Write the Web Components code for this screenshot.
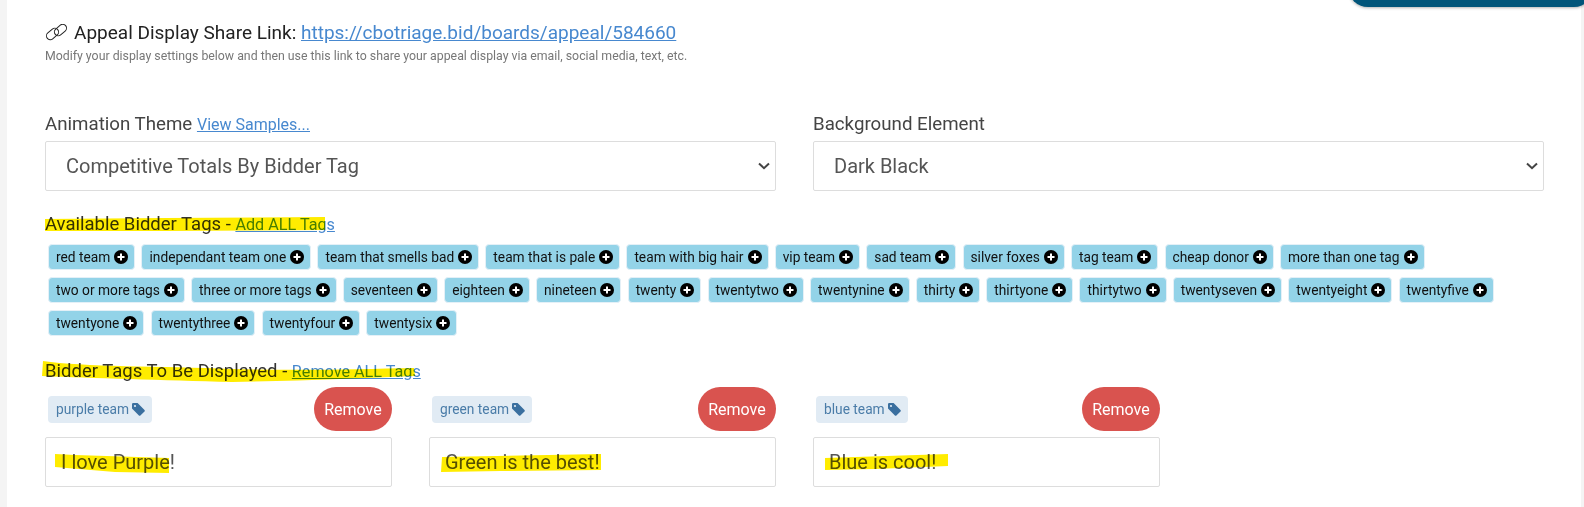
<!DOCTYPE html>
<html lang="en">
<head>
<meta charset="UTF-8">
<title>Appeal Display</title>
<style>
  html, body { margin: 0; height: 100%; }
  body { background: #f4f4f4; font-family: Roboto, "Liberation Sans", sans-serif; color: #333; overflow: hidden; }
  .sheet { margin: 0 3px 0 7px; height: 507px; background: #fff; padding: 0 37px 0 38px; box-sizing: border-box; position: relative; }
  .row { display: grid; grid-template-columns: repeat(4, 1fr); column-gap: 37px; }
  .two { grid-column: span 2; }
</style>
</head>
<body>
<div class="sheet">
  <top-pill></top-pill>
  <share-link url="https://cbotriage.bid/boards/appeal/584660">Modify your display settings below and then use this link to share your appeal display via email, social media, text, etc.</share-link>

  <div class="row" style="margin-top:51px">
    <field-select class="two" label="Animation Theme" link="View Samples..." value="Competitive Totals By Bidder Tag"></field-select>
    <field-select class="two" label="Background Element" value="Dark Black"></field-select>
  </div>

  <section-heading style="margin-top:23px" link="Add ALL Tags" mark="M0 2 L120 1 L280 0 L280 13 L120 14 L0 14 Z" mark-w="280" mark-h="15" mark-x="0" mark-y="3">Available Bidder Tags</section-heading>
  <tag-list id="available" style="margin-top:9px"></tag-list>

  <section-heading style="margin-top:25px" link="Remove ALL Tags" mark="M1 0 C40 6 120 5 190 8 C260 10 320 8 372 7 L373 15 C320 17 260 20 190 21 C120 19 50 17 0 15 Z" mark-w="374" mark-h="22" mark-x="-3" mark-y="0">Bidder Tags To Be Displayed</section-heading>
  <div class="row" style="margin-top:5px">
    <display-card tag="purple team" text="I love Purple!" mark="M0 0 L20 1 L114 4 L114 19 L60 18 L0 13 Z" mark-w="114" mark-h="19" mark-x="9"></display-card>
    <display-card tag="green team" text="Green is the best!" mark="M1 3 L160 0 L160 16 L60 17 L0 18 Z" mark-w="160" mark-h="18" mark-x="11"></display-card>
    <display-card tag="blue team" text="Blue is cool!" mark="M0 4 L123 0 L123 12 L50 15 L0 16 Z" mark-w="123" mark-h="16" mark-x="11"></display-card>
  </div>
</div>

<template id="share-tpl">
  <style>
    :host { display: block; padding-top: 22px; }
    .title { display: flex; align-items: center; gap: 6px; font-size: 19px; line-height: 21px; color: #222; }
    svg { width: 23px; height: 17px; flex: none; }
    a { color: #4788cf; }
    .hint { font-size: 12.32px; line-height: 14px; color: #777; margin-top: 6px; }
  </style>
  <div class="title">
    <svg viewBox="0 0 23 17" fill="none" stroke="#222" stroke-width="1">
      <rect x="0.8" y="6.2" width="13.5" height="7.6" rx="3.8" transform="rotate(-40 7.5 10)"/>
      <rect x="8.7" y="2.2" width="13.5" height="7.6" rx="3.8" transform="rotate(-40 15.5 6)"/>
    </svg>
    <span>Appeal Display Share Link: <a href="#"></a></span>
  </div>
  <div class="hint"><slot></slot></div>
</template>

<template id="select-tpl">
  <style>
    :host { display: block; }
    .label { font-size: 18.72px; line-height: 21px; color: #444; margin-bottom: 6px; }
    a { font-size: 16px; color: #4788cf; }
    .box { display: flex; align-items: center; justify-content: space-between; height: 50px; box-sizing: border-box; border: 1px solid #ddd; border-radius: 2px; padding: 0 5px 0 20px; font-size: 20px; color: #555; }
    svg { width: 12px; height: 8px; }
  </style>
  <div class="label"><span class="t"></span> <a href="#"></a></div>
  <div class="box"><span class="v"></span>
    <svg viewBox="0 0 12 8" fill="none" stroke="#444" stroke-width="2"><path d="M1 1.5 L6 6.2 L11 1.5"/></svg>
  </div>
</template>

<template id="heading-tpl">
  <style>
    :host { display: block; position: relative; font-size: 18.5px; line-height: 21px; color: #333; }
    a { color: #4788cf; font-size: 16.2px; }
    svg { position: absolute; mix-blend-mode: multiply; pointer-events: none; }
  </style>
  <slot></slot> - <a href="#"></a>
  <svg><path fill="#ffec00"/></svg>
</template>

<template id="tag-tpl">
  <style>
    :host { display: inline-flex; align-items: center; gap: 4px; height: 26px; box-sizing: border-box; padding: 0 6px 0 7px; background: #93d3e8; border: 1px solid #e4f0f7; border-radius: 4px; font-size: 13.75px; color: #111; white-space: nowrap; }
    svg { width: 14px; height: 14px; flex: none; }
  </style>
  <slot></slot>
  <svg viewBox="0 0 14 14"><circle cx="7" cy="7" r="7" fill="#000"/><path d="M7 3.5v7M3.5 7h7" stroke="#fff" stroke-width="2"/></svg>
</template>

<template id="taglist-tpl">
  <style>
    :host { display: flex; flex-wrap: wrap; gap: 7px 6.15px; padding-left: 3px; }
  </style>
  <slot></slot>
</template>

<template id="card-tpl">
  <style>
    :host { display: block; }
    .top { display: flex; align-items: center; justify-content: space-between; }
    .tag { display: inline-flex; align-items: center; gap: 3px; height: 27px; margin-left: 3px; padding: 0 7px 0 8px; background: #e1ebf4; border-radius: 4px; font-size: 13.75px; color: #4a7ca8; }
    .tag svg { width: 13px; height: 13px; }
    button { width: 78px; height: 44px; border: 0; border-radius: 22px; background: #d9534f; color: #fff; font: 400 16px Roboto, "Liberation Sans", sans-serif; padding: 0; }
    .box { position: relative; margin-top: 6px; height: 50px; box-sizing: border-box; border: 1px solid #ddd; border-radius: 2px; padding: 0 15px; display: flex; align-items: center; font-size: 20px; color: #555; }
    .mark { position: absolute; top: 16px; mix-blend-mode: multiply; }
  </style>
  <div class="top">
    <span class="tag"><span class="n"></span>
      <svg viewBox="0 0 13 13"><path fill="#3a6f9f" d="M0 1.2 A1.2 1.2 0 0 1 1.2 0 H5.6 L12.5 6.9 A1.1 1.1 0 0 1 12.5 8.4 L8.4 12.5 A1.1 1.1 0 0 1 6.9 12.5 L0 5.6 Z"/><circle cx="3" cy="3" r="1.1" fill="#e1ebf4"/></svg>
    </span>
    <button>Remove</button>
  </div>
  <div class="box"><span class="v"></span><svg class="mark"><path fill="#ffec00"/></svg></div>
</template>

<template id="pill-tpl">
  <style>
    :host { display: block; position: absolute; top: -33px; right: -13px; width: 246px; height: 40px; background: #01557a; border-radius: 20px; box-shadow: 0 1px 3px rgba(0,0,0,.3); }
  </style>
</template>

<script>
  // shadow root helper, every element clones its own template
  class Base extends HTMLElement {
    mount(id) {
      this.attachShadow({mode:'open'});
      this.shadowRoot.append(document.getElementById(id).content.cloneNode(true));
      return this.shadowRoot;
    }
    paintMark(svg) {
      svg.setAttribute('width', this.getAttribute('mark-w'));
      svg.setAttribute('height', this.getAttribute('mark-h'));
      svg.style.left = this.getAttribute('mark-x') + 'px';
      svg.querySelector('path').setAttribute('d', this.getAttribute('mark'));
    }
  }

  class ShareLink extends Base {
    connectedCallback() {
      let root = this.mount('share-tpl');
      root.querySelector('a').textContent = this.getAttribute('url');
    }
  }
  class FieldSelect extends Base {
    connectedCallback() {
      let root = this.mount('select-tpl');
      root.querySelector('.t').textContent = this.getAttribute('label');
      root.querySelector('.v').textContent = this.getAttribute('value');
      root.querySelector('a').textContent = this.getAttribute('link') || '';
    }
  }
  class SectionHeading extends Base {
    connectedCallback() {
      let root = this.mount('heading-tpl');
      root.querySelector('a').textContent = this.getAttribute('link');
      let svg = root.querySelector('svg');
      this.paintMark(svg);
      svg.style.top = this.getAttribute('mark-y') + 'px';
    }
  }
  class BidderTag extends Base {
    connectedCallback() { this.mount('tag-tpl'); }
  }
  class TagList extends Base {
    connectedCallback() { this.mount('taglist-tpl'); }
  }
  class DisplayCard extends Base {
    connectedCallback() {
      let root = this.mount('card-tpl');
      root.querySelector('.n').textContent = this.getAttribute('tag');
      root.querySelector('.v').textContent = this.getAttribute('text');
      this.paintMark(root.querySelector('.mark'));
    }
  }
  class TopPill extends Base {
    connectedCallback() { this.mount('pill-tpl'); }
  }

  customElements.define('share-link', ShareLink);
  customElements.define('field-select', FieldSelect);
  customElements.define('section-heading', SectionHeading);
  customElements.define('bidder-tag', BidderTag);
  customElements.define('tag-list', TagList);
  customElements.define('display-card', DisplayCard);
  customElements.define('top-pill', TopPill);

  const names = ['red team','independant team one','team that smells bad','team that is pale','team with big hair','vip team','sad team','silver foxes','tag team','cheap donor','more than one tag',
    'two or more tags','three or more tags','seventeen','eighteen','nineteen','twenty','twentytwo','twentynine','thirty','thirtyone','thirtytwo','twentyseven','twentyeight','twentyfive',
    'twentyone','twentythree','twentyfour','twentysix'];
  const list = document.getElementById('available');
  names.forEach(n => {
    let t = document.createElement('bidder-tag');
    t.textContent = n;
    list.append(t);
  });
</script>
</body>
</html>
